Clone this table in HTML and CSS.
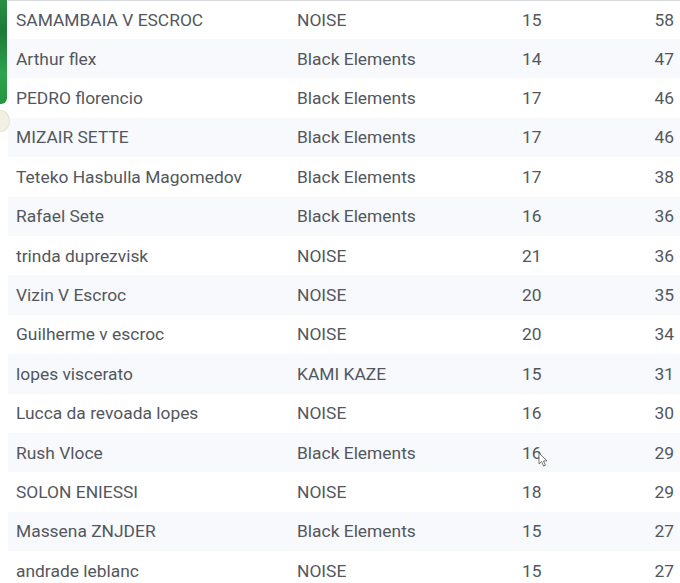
FILE: index.html
```html
<!DOCTYPE html>
<html lang="pt">
<head>
<meta charset="utf-8">
<title>Ranking</title>
<link rel="stylesheet" href="styles.css">
</head>
<body>
<div class="page">
  <div class="side-tab"></div>
  <div class="side-dot"></div>
  <div class="table">
    <div class="row first"><span class="name">SAMAMBAIA V ESCROC</span><span class="team">NOISE</span><span class="num">15</span><span class="pts">58</span></div>
    <div class="row alt"><span class="name">Arthur flex</span><span class="team">Black Elements</span><span class="num">14</span><span class="pts">47</span></div>
    <div class="row"><span class="name">PEDRO florencio</span><span class="team">Black Elements</span><span class="num">17</span><span class="pts">46</span></div>
    <div class="row alt"><span class="name">MIZAIR SETTE</span><span class="team">Black Elements</span><span class="num">17</span><span class="pts">46</span></div>
    <div class="row"><span class="name">Teteko Hasbulla Magomedov</span><span class="team">Black Elements</span><span class="num">17</span><span class="pts">38</span></div>
    <div class="row alt"><span class="name">Rafael Sete</span><span class="team">Black Elements</span><span class="num">16</span><span class="pts">36</span></div>
    <div class="row"><span class="name">trinda duprezvisk</span><span class="team">NOISE</span><span class="num">21</span><span class="pts">36</span></div>
    <div class="row alt"><span class="name">Vizin V Escroc</span><span class="team">NOISE</span><span class="num">20</span><span class="pts">35</span></div>
    <div class="row"><span class="name">Guilherme v escroc</span><span class="team">NOISE</span><span class="num">20</span><span class="pts">34</span></div>
    <div class="row alt"><span class="name">lopes viscerato</span><span class="team">KAMI KAZE</span><span class="num">15</span><span class="pts">31</span></div>
    <div class="row"><span class="name">Lucca da revoada lopes</span><span class="team">NOISE</span><span class="num">16</span><span class="pts">30</span></div>
    <div class="row alt"><span class="name">Rush Vloce</span><span class="team">Black Elements</span><span class="num">16<svg class="cursor" width="11" height="15" viewBox="0 0 11 15"><path d="M1 1 L1 12 L3.6 9.6 L5.6 14 L7.4 13.2 L5.5 8.9 L9 8.9 Z" fill="#fff" stroke="#666" stroke-width="0.9" stroke-linejoin="round"/></svg></span><span class="pts">29</span></div>
    <div class="row"><span class="name">SOLON ENIESSI</span><span class="team">NOISE</span><span class="num">18</span><span class="pts">29</span></div>
    <div class="row alt"><span class="name">Massena ZNJDER</span><span class="team">Black Elements</span><span class="num">15</span><span class="pts">27</span></div>
    <div class="row"><span class="name">andrade leblanc</span><span class="team">NOISE</span><span class="num">15</span><span class="pts">27</span></div>
  </div>
</div>
</body>
</html>
```

FILE: styles.css
```css
html, body {
  margin: 0;
  padding: 0;
  background: #ffffff;
}

.page {
  position: relative;
  width: 680px;
  height: 583px;
  overflow: hidden;
  padding-left: 8px;
  box-sizing: border-box;
  font-family: Roboto, "Noto Sans", Arial, sans-serif;
  font-size: 17.4px;
  color: #53575d;
}

.side-tab {
  position: absolute;
  left: 0;
  top: 0;
  width: 7px;
  height: 104px;
  border-bottom-right-radius: 6px;
  background: linear-gradient(180deg, #2a8f45 0%, #1c7a37 30%, #2ea24e 70%, #24943f 100%);
}

.side-dot {
  position: absolute;
  left: -8px;
  top: 110px;
  width: 16px;
  height: 20px;
  border-radius: 50%;
  background: #f1f0e2;
  border: 1px solid #e4e3d4;
}

.table {
  border-top: 1px solid #d8d9dc;
}

.row {
  display: grid;
  grid-template-columns: 289px 225px 1fr 80px;
  align-items: center;
  height: 39.4px;
  background: #ffffff;
}

.row.first {
  height: 38px;
}

.row.alt {
  background: #f7f9fc;
}

.name {
  padding-left: 8px;
  white-space: nowrap;
}

.num {
  position: relative;
}

.pts {
  text-align: right;
  padding-right: 6px;
}

.cursor {
  position: absolute;
  left: 16px;
  top: 9px;
}
```
